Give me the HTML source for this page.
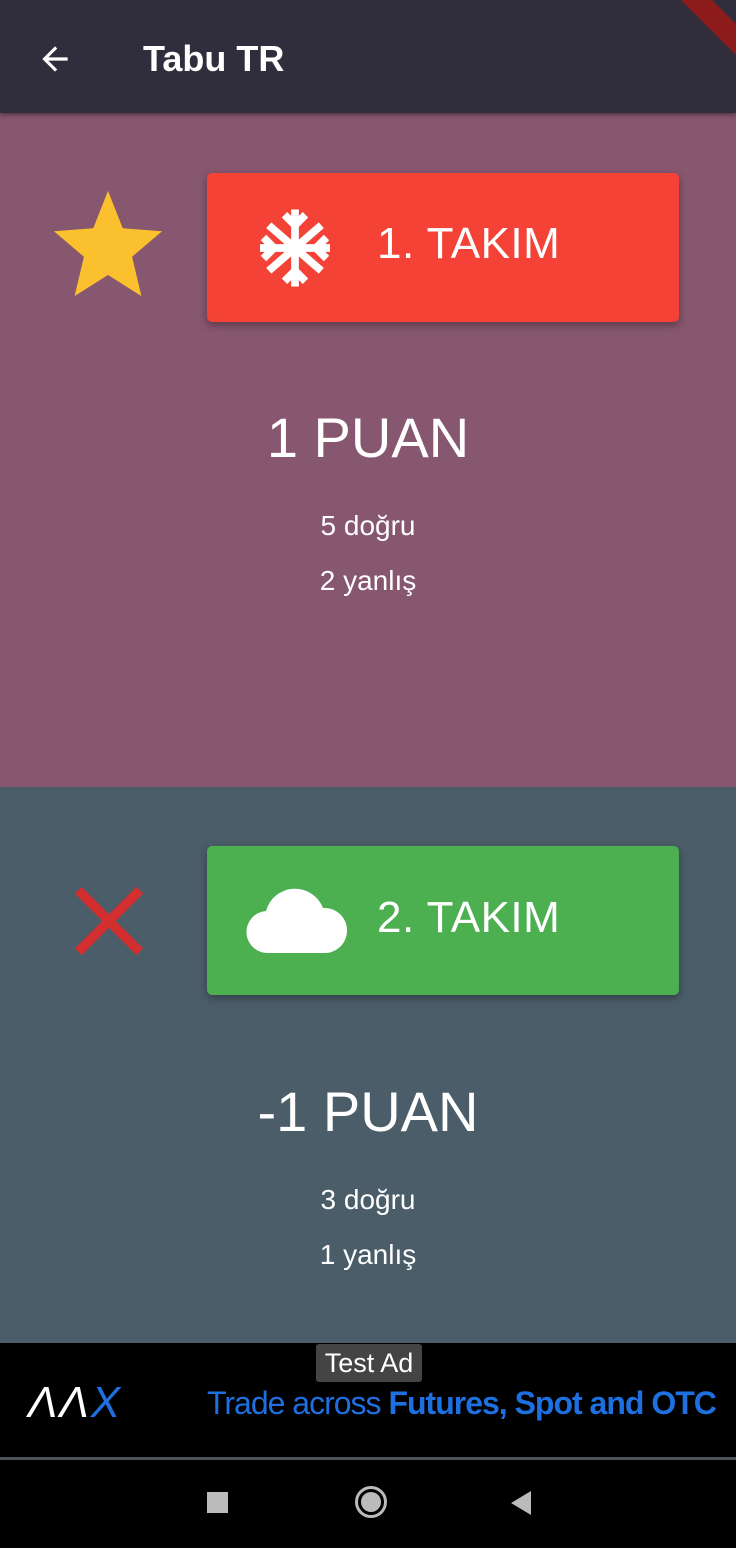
<!DOCTYPE html>
<html><head><meta charset="utf-8"><style>
*{margin:0;padding:0;box-sizing:border-box}
body{width:736px;height:1548px;overflow:hidden;background:#000;font-family:"Liberation Sans",sans-serif;position:relative;color:#fff}
.abs{position:absolute}
.bar{left:0;top:0;width:736px;height:113px;background:#302e3c;box-shadow:0 2px 4px rgba(0,0,0,.4);z-index:2;overflow:hidden}
.p1{left:0;top:113px;width:736px;height:674px;background:#87566f}
.p2{left:0;top:787px;width:736px;height:556px;background:#4b5d69}
.btn{left:207px;width:472px;height:149px;border-radius:5px;box-shadow:0 3px 8px rgba(0,0,0,.35)}
.bt{font-size:44px;left:377px;letter-spacing:0.5px}
.c{width:736px;text-align:center;left:0}
.s{font-size:28px}
</style></head><body>
<div class="abs bar">
<svg class="abs" style="left:36px;top:40px" width="38" height="38" viewBox="0 0 24 24"><path d="M20 11H7.8l5.6-5.6L12 4l-8 8 8 8 1.4-1.4L7.8 13H20z" fill="#fff"/></svg>
<div class="abs" style="left:143px;top:38px;font-size:36px;font-weight:bold">Tabu TR</div>
<div class="abs" style="width:120px;height:22px;background:#8e1c1c;transform:rotate(45deg);transform-origin:0 0;left:690px;top:-22px"></div>
</div>
<div class="abs p1"></div>
<div class="abs p2"></div>
<svg class="abs" style="left:46px;top:186px" width="124" height="118" viewBox="0 0 24 24"><path d="M12 1l3 7.6 8 .6-6.1 5.2 1.9 8L12 18.1 5.2 22.4l1.9-8L1 9.2l8-.6z" fill="#fbc02d"/></svg>
<div class="abs btn" style="top:173px;background:#f44336"></div>
<svg class="abs" style="left:252px;top:206px" width="86" height="84" viewBox="0 0 24 24" stroke="#fff" stroke-width="2.2" fill="none"><path d="M12 1v22M2 12h20M4.5 5.5l15 13M19.5 5.5l-15 13M9 2.5l3 3 3-3M9 21.5l3-3 3 3M3 9l3 3-3 3M21 9l-3 3 3 3"/></svg>
<div class="abs bt" style="top:219px">1. TAKIM</div>
<div class="abs c" style="top:405px;font-size:56px">1 PUAN</div>
<div class="abs c s" style="top:510px">5 doğru</div>
<div class="abs c s" style="top:565px">2 yanlış</div>
<svg class="abs" style="left:68px;top:880px" width="82" height="82" viewBox="0 0 24 24"><path d="M3 3l18 18M21 3L3 21" stroke="#d32f2f" stroke-width="2.8"/></svg>
<div class="abs btn" style="top:846px;background:#4caf50"></div>
<svg class="abs" style="left:245px;top:883px" width="102" height="74" viewBox="0 0 34 24"><path d="M8 23a7 7 0 0 1-1-14 10 10 0 0 1 19-1 7.5 7.5 0 0 1 1 15z" fill="#fff"/></svg>
<div class="abs bt" style="top:893px">2. TAKIM</div>
<div class="abs c" style="top:1079px;font-size:56px">-1 PUAN</div>
<div class="abs c s" style="top:1184px">3 doğru</div>
<div class="abs c s" style="top:1239px">1 yanlış</div>
<div class="abs" style="left:316px;top:1344px;width:106px;height:38px;background:#444;border-radius:3px;font-size:27px;text-align:center;line-height:38px;color:#fff">Test Ad</div>
<div class="abs" style="left:28px;top:1378px;font-size:44px;font-style:italic;letter-spacing:2px">ΛΛ<span style="color:#1e6fe0">X</span></div>
<div class="abs" style="left:207px;top:1385px;font-size:32px;color:#1e6fe0;white-space:nowrap;letter-spacing:-1px">Trade across <b>Futures, Spot and OTC</b></div>
<div class="abs" style="left:0;top:1457px;width:736px;height:3px;background:#4a545c"></div>
<div class="abs" style="left:207px;top:1492px;width:21px;height:21px;background:#bbb"></div>
<div class="abs" style="left:355px;top:1486px;width:32px;height:32px;border:3px solid #bbb;border-radius:50%"></div>
<div class="abs" style="left:361px;top:1492px;width:20px;height:20px;background:#bbb;border-radius:50%"></div>
<div class="abs" style="left:511px;top:1491px;width:0;height:0;border-top:12px solid transparent;border-bottom:12px solid transparent;border-right:20px solid #bbb"></div>
</body></html>
